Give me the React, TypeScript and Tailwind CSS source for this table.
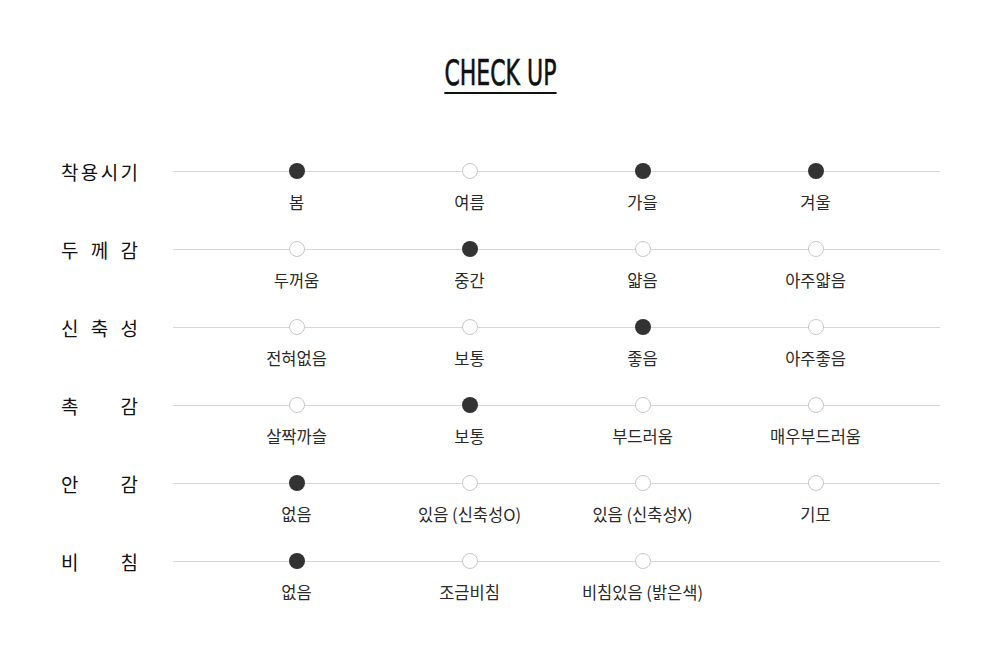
import React from "react";

type Row = {
  label: string[];
  options: string[];
  checked: number[];
};

const rows: Row[] = [
  { label: ["착", "용", "시", "기"], options: ["봄", "여름", "가을", "겨울"], checked: [0, 2, 3] },
  { label: ["두", "께", "감"], options: ["두꺼움", "중간", "얇음", "아주얇음"], checked: [1] },
  { label: ["신", "축", "성"], options: ["전혀없음", "보통", "좋음", "아주좋음"], checked: [2] },
  { label: ["촉", "감"], options: ["살짝까슬", "보통", "부드러움", "매우부드러움"], checked: [1] },
  { label: ["안", "감"], options: ["없음", "있음 (신축성O)", "있음 (신축성X)", "기모"], checked: [0] },
  { label: ["비", "침"], options: ["없음", "조금비침", "비침있음 (밝은색)"], checked: [0] },
];

const Dot: React.FC<{ on: boolean }> = ({ on }) =>
  on ? (
    <span className="block w-4 h-4 rounded-full bg-[#333333]" />
  ) : (
    <span className="block w-4 h-4 rounded-full bg-white border border-[#c8c8c8]" />
  );

export default function App() {
  return (
    <div
      className="w-[1000px] h-[661px] bg-white text-[#222222]"
      style={{ fontFamily: '"Noto Sans CJK KR", "Noto Sans", sans-serif' }}
    >
      {/* Title */}
      <div className="flex justify-center pt-[55px]">
        <h2
          className="inline-block border-b-2 border-[#111111] text-[36px] leading-[36px] pb-[1px] text-[#111111] scale-x-[0.68] [-webkit-text-stroke:0.6px_#111111]"
          style={{ fontFamily: '"Liberation Sans Narrow", "DejaVu Sans Condensed", sans-serif' }}
        >
          CHECK UP
        </h2>
      </div>

      {/* Rows */}
      <div className="mt-[69px] flex flex-col gap-[29px]">
        {rows.map((row, i) => (
          <div key={i} className="flex pl-[61px]">
            <div className="w-[112px] h-4 flex items-center">
              <div className="w-[77px] flex justify-between text-[19px] leading-none text-[#111111]">
                {row.label.map((c, j) => (
                  <span key={j}>{c}</span>
                ))}
              </div>
            </div>
            <div className="w-[767px]">
              <div className="h-4 pl-[37px] grid grid-cols-[repeat(4,173px)] bg-[linear-gradient(#d6d6d6,#d6d6d6)] bg-no-repeat bg-center bg-[length:100%_1px]">
                {row.options.map((_, k) => (
                  <div key={k} className="flex justify-center">
                    <Dot on={row.checked.includes(k)} />
                  </div>
                ))}
              </div>
              <div className="mt-[13px] pl-[37px] grid grid-cols-[repeat(4,173px)]">
                {row.options.map((o, k) => (
                  <div key={k} className="text-center text-[16.5px] leading-5 text-[#2a2a2a] whitespace-nowrap">
                    {o}
                  </div>
                ))}
              </div>
            </div>
          </div>
        ))}
      </div>
    </div>
  );
}
